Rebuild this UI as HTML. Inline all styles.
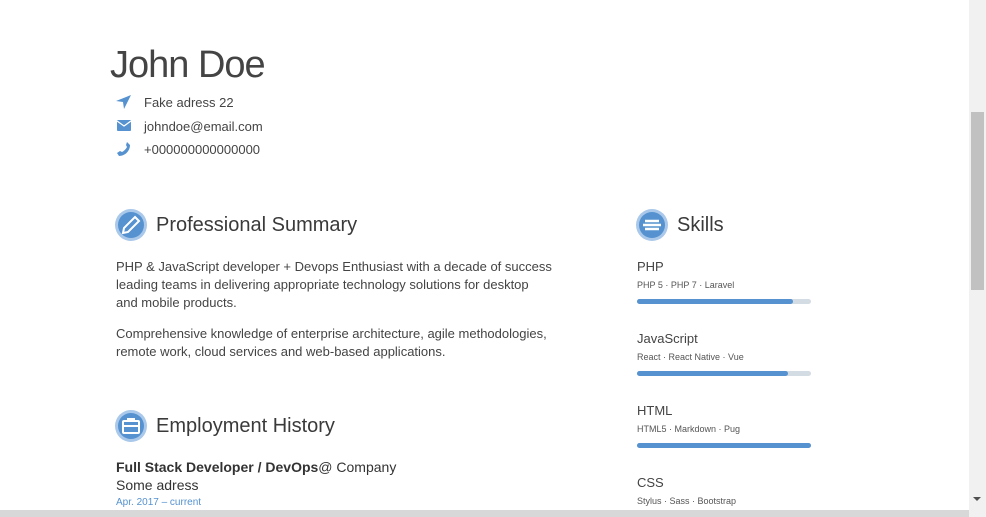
<!DOCTYPE html>
<html><head><style>
*{margin:0;padding:0;box-sizing:border-box}
body{width:986px;height:517px;overflow:hidden;background:#fff;font-family:"Liberation Sans",sans-serif;color:#444;position:relative}
.a{position:absolute;white-space:nowrap}
.ic{position:absolute;width:32px;height:32px;border-radius:50%;background:#a9c8ea}
.ic i{position:absolute;left:3px;top:3px;width:26px;height:26px;border-radius:50%;background:#5592cf;display:block}
h2{font-weight:normal;font-size:20px;color:#3a3a3a}
.p{font-size:13px;line-height:18px;color:#444}
.bar{position:absolute;left:637px;width:174px;height:5px;border-radius:3px;background:#d3dbe3}
.bar b{display:block;height:5px;border-radius:3px;background:#5592cf}
.sk{font-size:13px;color:#444}
.sd{font-size:9px;color:#555}
</style></head><body>
<div class="a" style="left:110px;top:44px;font-size:38px;color:#444;letter-spacing:-1px">John Doe</div>
<svg class="a" style="left:116px;top:95px" width="15" height="14" viewBox="0 0 15 14"><path d="M15 0L0 6l7 1 1 7z" fill="#5592cf"/></svg>
<div class="a p" style="left:144px;top:94px">Fake adress 22</div>
<svg class="a" style="left:117px;top:120px" width="14" height="11" viewBox="0 0 14 11"><rect width="14" height="11" rx="1" fill="#5592cf"/><path d="M0 1l7 5 7-5" stroke="#fff" stroke-width="1.3" fill="none"/></svg>
<div class="a p" style="left:144px;top:118px">johndoe@email.com</div>
<svg class="a" style="left:117px;top:142px" width="14" height="14" viewBox="0 0 14 14"><path d="M10 0l3 3c0 6-5 11-11 11L0 11l3-2 2 1c2-1 4-3 5-5L9 3z" fill="#5592cf"/></svg>
<div class="a p" style="left:144px;top:141px">+000000000000000</div>

<div class="ic" style="left:115px;top:209px"><i></i></div>
<svg class="a" style="left:120px;top:214px" width="22" height="22" viewBox="0 0 22 22"><path d="M15 3l4 4-11 11-5 1 1-5z" fill="none" stroke="#fff" stroke-width="2"/></svg>
<h2 class="a" style="left:156px;top:214px">Professional Summary</h2>
<div class="a p" style="left:116px;top:258px">PHP &amp; JavaScript developer + Devops Enthusiast with a decade of success<br>leading teams in delivering appropriate technology solutions for desktop<br>and mobile products.</div>
<div class="a p" style="left:116px;top:325px">Comprehensive knowledge of enterprise architecture, agile methodologies,<br>remote work, cloud services and web-based applications.</div>

<div class="ic" style="left:115px;top:410px"><i></i></div>
<svg class="a" style="left:115px;top:410px" width="32" height="32" viewBox="0 0 32 32"><rect x="8" y="11" width="16" height="12" rx="1" fill="none" stroke="#fff" stroke-width="2"/><path d="M8 16h16M13 11V9h6v2" stroke="#fff" stroke-width="2" fill="none"/></svg>
<h2 class="a" style="left:156px;top:415px">Employment History</h2>
<div class="a" style="left:116px;top:459px;font-size:14px;color:#333"><b>Full Stack Developer / DevOps</b>@ Company</div>
<div class="a" style="left:116px;top:477px;font-size:14px;color:#333">Some adress</div>
<div class="a" style="left:116px;top:497px;font-size:10px;color:#5592cf">Apr. 2017 – current</div>

<div class="ic" style="left:636px;top:209px"><i></i></div>
<svg class="a" style="left:636px;top:209px" width="32" height="32" viewBox="0 0 32 32"><path d="M9 12h14M7 16h18M9 20h14" stroke="#fff" stroke-width="2.5"/></svg>
<h2 class="a" style="left:677px;top:214px">Skills</h2>
<div class="a sk" style="left:637px;top:259px">PHP</div>
<div class="a sd" style="left:637px;top:280px">PHP 5 · PHP 7 · Laravel</div>
<div class="bar" style="top:299px"><b style="width:156px"></b></div>
<div class="a sk" style="left:637px;top:331px">JavaScript</div>
<div class="a sd" style="left:637px;top:352px">React · React Native · Vue</div>
<div class="bar" style="top:371px"><b style="width:151px"></b></div>
<div class="a sk" style="left:637px;top:403px">HTML</div>
<div class="a sd" style="left:637px;top:424px">HTML5 · Markdown · Pug</div>
<div class="bar" style="top:443px"><b style="width:174px"></b></div>
<div class="a sk" style="left:637px;top:475px">CSS</div>
<div class="a sd" style="left:637px;top:496px">Stylus · Sass · Bootstrap</div>

<div class="a" style="left:969px;top:0;width:17px;height:517px;background:#f1f1f1"></div>
<div class="a" style="left:971px;top:112px;width:13px;height:178px;background:#c1c1c1"></div>
<svg class="a" style="left:972px;top:496px" width="10" height="6"><path d="M1 1h8L5 5z" fill="#505050"/></svg>
<div class="a" style="left:0;top:510px;width:969px;height:7px;background:#d8d8d8"></div>
</body></html>
